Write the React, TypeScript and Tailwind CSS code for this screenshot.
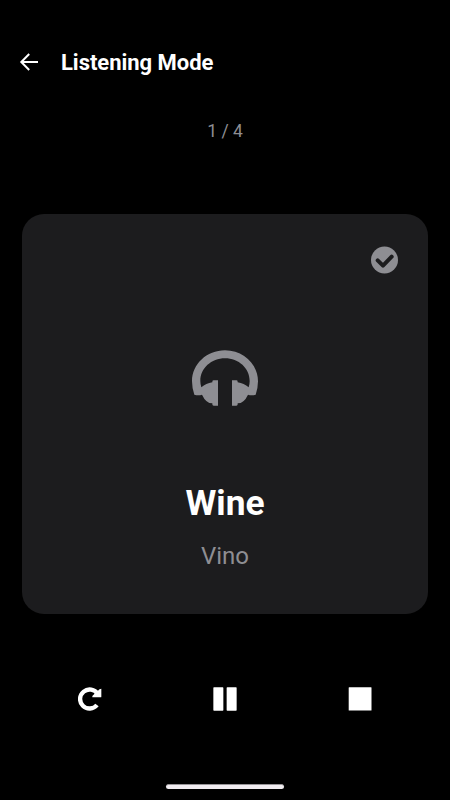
export default function App() {
  return (
    <div className="flex h-[800px] w-[450px] flex-col bg-black font-['Roboto',sans-serif] text-white">
      <header className="mt-[42px] flex h-10 items-center pl-[17px]">
        <svg className="-mt-px" width="24" height="24" viewBox="0 0 24 24" fill="none" stroke="currentColor" strokeWidth="2">
          <path d="M12.2 4 4.3 12l7.9 8M4.3 12H21" />
        </svg>
        <h1 className="ml-5 text-[22px] font-bold tracking-[-0.03px]">Listening Mode</h1>
      </header>
      <p className="mt-[36px] h-[26px] text-center text-[17.5px] leading-[26px] text-[#8e8e93]">1 / 4</p>
      <main className="mx-[22px] mt-[70px] flex h-[400px] flex-col items-center rounded-[22px] bg-[#1c1c1e]">
        <div className="flex w-full justify-end pr-[30px] pt-[32px] text-[#8e8e93]">
          <svg width="27" height="28" viewBox="0 0 81 84">
            <circle cx="40.5" cy="42" r="40.5" fill="currentColor" />
            <path d="m20 43 16 16 26-27" fill="none" stroke="#1c1c1e" strokeWidth="12" strokeLinecap="round" strokeLinejoin="round" />
          </svg>
        </div>
        <svg width="66" height="56" viewBox="36 31 198 168" className="mt-[76px] text-[#8e8e93]" fill="currentColor">
          <path d="M43 165Q36 145 36 125C36 74 80 32 135 32S234 74 234 125Q234 145 227 165Q215 168 204 165Q192 191 173 191V194Q173 198 169 198H156V122H169Q173 122 173 126V128Q192 131 206 143Q209 134 209 124C209 86 176 56 135 56S61 86 61 124Q61 134 64 143Q78 131 97 128V126Q97 122 101 122H114V198H101Q97 198 97 194V191Q78 191 66 165Q55 168 43 165Z" />
        </svg>
        <h2 className="mt-[74px] text-[35.3px] font-bold leading-[46px]">Wine</h2>
        <p className="mt-[13px] text-[24px] leading-[34px] text-[#8e8e93]">Vino</p>
      </main>
      <nav className="mt-[69px] flex h-8 items-center px-[22px]">
        <div className="flex flex-1 justify-center">
          <svg width="24" height="24" viewBox="0 0 72 72" fill="none">
            <path d="M57 54A28.5 28.5 0 1 1 59 21" stroke="currentColor" strokeWidth="13" strokeLinejoin="round" />
            <path d="M70 5v24q0 2-2 2H43v-4L54 16l6-5q4-6 10-6Z" fill="currentColor" />
          </svg>
        </div>
        <div className="flex flex-1 justify-center">
          <svg width="24" height="24" viewBox="0 0 24 24" fill="currentColor">
            <rect x=".35" y=".35" width="10" height="23.3" rx=".6" />
            <rect x="13.65" y=".35" width="10" height="23.3" rx=".6" />
          </svg>
        </div>
        <div className="flex flex-1 justify-center">
          <svg width="24" height="24" viewBox="0 0 24 24" fill="currentColor">
            <rect x=".7" y=".35" width="22.8" height="23.2" rx=".4" />
          </svg>
        </div>
      </nav>
      <div className="mx-auto mt-[69px] h-[5px] w-[118px] rounded-full border-t border-[#969396] bg-[#f1edf1]" />
    </div>
  );
}
